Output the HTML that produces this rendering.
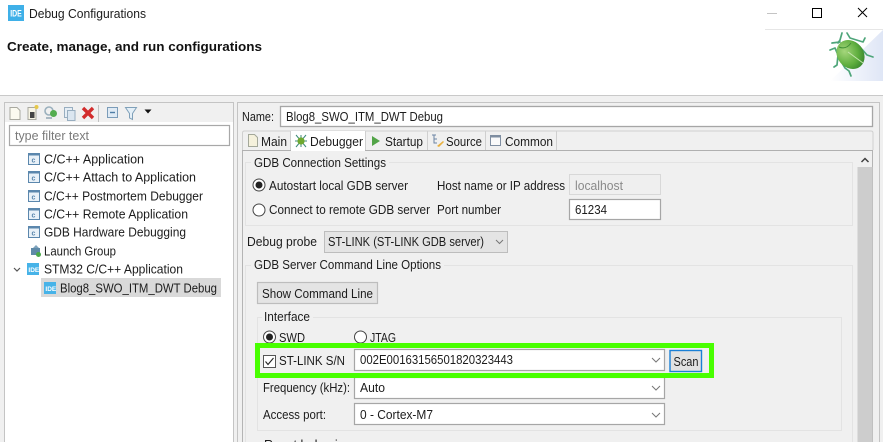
<!DOCTYPE html>
<html><head><meta charset="utf-8"><title>Debug Configurations</title>
<style>
html,body{margin:0;padding:0;width:883px;height:442px;overflow:hidden;background:#fff}
svg{display:block;filter:blur(.3px)}
text{font-family:"Liberation Sans",sans-serif;font-size:12.5px;fill:#1c1c1c}
</style></head><body>
<svg width="883" height="442" viewBox="0 0 883 442" xmlns="http://www.w3.org/2000/svg">
<defs>
<linearGradient id="bg" x1="0" y1="0" x2="1" y2="0"><stop offset="0" stop-color="#ffffff"/><stop offset="1" stop-color="#dfe6f6"/></linearGradient>
<radialGradient id="bug" cx="0.4" cy="0.3" r="0.8"><stop offset="0" stop-color="#a5d67c"/><stop offset="0.6" stop-color="#5fae3e"/><stop offset="1" stop-color="#2f7d2a"/></radialGradient>
<g id="cfile"><rect x="0.5" y="0.5" width="11" height="11" fill="#e9f1f8" stroke="#5b87ad"/><rect x="0" y="0" width="12" height="2.5" fill="#5b87ad"/><text x="3.5" y="9.5" style="font-size:7px;font-weight:bold;fill:#5b87ad">c</text></g>
<g id="ide"><rect width="12" height="12" fill="#47b3e8"/><text x="1.4" y="9" style="font-size:6.5px;font-weight:bold;fill:#fff">IDE</text></g>
</defs>

<rect width="883" height="442" fill="#fff"/>
<!-- title bar -->
<rect x="8" y="5" width="16" height="16" fill="#3fb0e8"/>
<text x="10.2" y="16.5" textLength="11.6" lengthAdjust="spacingAndGlyphs" style="font-size:9px;font-weight:bold;fill:#fff">IDE</text>
<text x="29" y="18" textLength="117" lengthAdjust="spacingAndGlyphs">Debug Configurations</text>
<rect x="767" y="13" width="10" height="1" fill="#c4c4c4"/>
<rect x="812.5" y="8.5" width="9" height="9" fill="none" stroke="#000"/>
<path d="M858 8L867 17M867 8L858 17" stroke="#000" stroke-width="1" fill="none"/>
<rect x="765" y="29" width="118" height="1" fill="#e6e6e6"/>
<text x="7" y="51" textLength="255" lengthAdjust="spacingAndGlyphs" style="font-weight:bold;font-size:13px;fill:#111">Create, manage, and run configurations</text>

<!-- banner art -->
<polygon points="883,30 883,81 830,81" fill="url(#bg)"/>
<g fill="none" stroke="#4ea57a" stroke-width="1.7" stroke-linecap="round" stroke-linejoin="round">
<path d="M842 33L840 40L838 43"/>
<path d="M847 33L850 38L863 42L865 38"/>
<path d="M832 43L840 42"/>
<path d="M830 50L835 48L838 55L837 65L834 67"/>
<path d="M842 63L845 68L849 71L851 76"/>
<path d="M860 47L867 55L873 57"/>
</g>
<ellipse cx="850.500" cy="54.500" rx="13" ry="15.500" transform="rotate(-40 850.500 54.500)" fill="url(#bug)"/>
<path d="M848 52L863 63" stroke="#c4e6ae" stroke-width="1" fill="none"/>
<path d="M839 47Q846 50 851 43" stroke="#3f8f35" stroke-width="1" fill="none"/>

<!-- dialog body -->
<rect x="0" y="95" width="883" height="347" fill="#f0f0f0"/>
<rect x="0" y="95" width="883" height="1" fill="#c9c9c9"/>

<!-- left panel -->
<rect x="4.500" y="102.500" width="229" height="340" fill="#f0f0f0" stroke="#c4c4c4"/>
<rect x="5" y="122" width="228" height="320" fill="#fff"/>
<rect x="9.500" y="125.500" width="220" height="20" fill="#fff" stroke="#a8a8a8" stroke-width="1.200"/>
<text x="15" y="140" textLength="74" lengthAdjust="spacingAndGlyphs" style="fill:#7a7a7a">type filter text</text>

<!-- toolbar -->
<path d="M10 107.500h7l3 3v9h-10z" fill="#fbfaf0" stroke="#a9a9a0"/>
<path d="M28 107.500h8v12h-8z" fill="#f7f4e4" stroke="#a9a9a0"/><rect x="30" y="112" width="4.500" height="6" fill="#444"/><circle cx="36.500" cy="107" r="2" fill="#e6c84a"/>
<circle cx="49" cy="111" r="4" fill="none" stroke="#9ab0bd" stroke-width="1.600"/><path d="M46 118h6" stroke="#a9b8c2" stroke-width="2"/><circle cx="53.500" cy="113.500" r="3.500" fill="#54ad4f"/>
<rect x="64.500" y="107.500" width="8" height="10" fill="#e6eef5" stroke="#98aec0"/><rect x="67.500" y="110.500" width="7.500" height="10" fill="#dbe6f0" stroke="#98aec0"/>
<path d="M83 108L93 118M93 108L83 118" stroke="#d22c2c" stroke-width="3.400" fill="none"/>
<rect x="98" y="105" width="1" height="17" fill="#c2c2c2"/>
<rect x="107.500" y="107.500" width="10" height="10" fill="#dfeaf4" stroke="#7b9cb9"/><path d="M110 112.500h5" stroke="#4f7ea6" stroke-width="1.400"/>
<path d="M125.500 107.500h11l-4 6v6l-3-1.500v-4.500z" fill="#e4eff7" stroke="#7fa0b9"/>
<path d="M144.500 109.500h7l-3.500 4z" fill="#111"/>

<!-- tree -->
<use href="#cfile" x="28" y="153"/><text x="44" y="163.500" textLength="100" lengthAdjust="spacingAndGlyphs">C/C++ Application</text>
<use href="#cfile" x="28" y="171"/><text x="44" y="181.500" textLength="152" lengthAdjust="spacingAndGlyphs">C/C++ Attach to Application</text>
<use href="#cfile" x="28" y="190"/><text x="44" y="200.500" textLength="159" lengthAdjust="spacingAndGlyphs">C/C++ Postmortem Debugger</text>
<use href="#cfile" x="28" y="208"/><text x="44" y="218.500" textLength="144" lengthAdjust="spacingAndGlyphs">C/C++ Remote Application</text>
<use href="#cfile" x="28" y="226"/><text x="44" y="236.500" textLength="142" lengthAdjust="spacingAndGlyphs">GDB Hardware Debugging</text>
<rect x="31" y="248" width="9" height="7" fill="#5f8aa8"/><path d="M33 248l3-3 3 3" fill="#7ea3bd"/><circle cx="38.500" cy="254.500" r="2.500" fill="#4aa84a"/>
<text x="44" y="255.500" textLength="72" lengthAdjust="spacingAndGlyphs">Launch Group</text>
<path d="M14 268l3 3 3-3" fill="none" stroke="#555" stroke-width="1.200"/>
<use href="#ide" x="27" y="263"/><text x="44" y="273.500" textLength="139" lengthAdjust="spacingAndGlyphs">STM32 C/C++ Application</text>
<rect x="41" y="278" width="180" height="19" fill="#d9d9d9"/>
<use href="#ide" x="44" y="282"/><text x="60" y="292.500" textLength="157" lengthAdjust="spacingAndGlyphs">Blog8_SWO_ITM_DWT Debug</text>

<!-- right panel -->
<rect x="237.500" y="102.500" width="642" height="340" fill="#f0f0f0" stroke="#c4c4c4"/>
<text x="242" y="121" textLength="32" lengthAdjust="spacingAndGlyphs">Name:</text>
<rect x="280.500" y="106.500" width="592" height="20" fill="#fff" stroke="#a6a6a6" stroke-width="1.300"/>
<text x="286" y="121" textLength="157" lengthAdjust="spacingAndGlyphs">Blog8_SWO_ITM_DWT Debug</text>

<!-- tabs -->
<rect x="242.500" y="150.500" width="630" height="292" fill="#f0f0f0" stroke="#b4b4b4"/>
<path d="M242.500 150V133q0-2 2-2H871q2 0 2 2v17" fill="#f0f0f0" stroke="#cfcfcf"/>
<rect x="242" y="150" width="631" height="1" fill="#b0b0b0"/>
<path d="M290.500 131v19M365.500 131v19M427.500 131v19M485.500 131v19M556.500 131v19" stroke="#cfcfcf"/>
<rect x="291" y="131" width="74" height="20" fill="#fff"/>
<path d="M248.500 134.500h6l3 3v9h-9z" fill="#f5f1dc" stroke="#a4a89a"/>
<text x="261" y="146" textLength="26" lengthAdjust="spacingAndGlyphs">Main</text>
<path d="M296 135l10 12M306 135l-10 12M295 141h12M301 135v12" stroke="#3d8a78" stroke-width="1"/><circle cx="301" cy="141" r="3.600" fill="#6fa92f"/>
<text x="310" y="146" textLength="53" lengthAdjust="spacingAndGlyphs">Debugger</text>
<path d="M372 136v10l8-5z" fill="#52a447"/>
<text x="385" y="146" textLength="38" lengthAdjust="spacingAndGlyphs">Startup</text>
<path d="M432 135h4M434 135v8h3M434 139h3" stroke="#6c85a5" fill="none"/><path d="M437 146l6-5 1 1-5 5z" fill="#e8b03f"/>
<text x="446" y="146" textLength="36" lengthAdjust="spacingAndGlyphs">Source</text>
<rect x="490.500" y="135.500" width="10" height="10" fill="#fafafa" stroke="#7f8ea1"/><rect x="490" y="135" width="11" height="2.500" fill="#7f8ea1"/>
<text x="505" y="146" textLength="48" lengthAdjust="spacingAndGlyphs">Common</text>

<!-- scrollbar -->
<rect x="857" y="151" width="15" height="291" fill="#f0f0f0"/>
<rect x="857.500" y="167" width="15" height="275" fill="#cdcdcd"/>
<path d="M861.500 162l3.500-3.500 3.500 3.500" fill="none" stroke="#404040" stroke-width="1.500"/>

<!-- GDB connection -->
<rect x="245.500" y="162.500" width="607" height="63" fill="none" stroke="#e3e3e3"/>
<rect x="251" y="158" width="138" height="10" fill="#f0f0f0"/>
<text x="254" y="167" textLength="132" lengthAdjust="spacingAndGlyphs">GDB Connection Settings</text>
<circle cx="259" cy="185" r="6" fill="#fff" stroke="#444"/><circle cx="259" cy="185" r="3.500" fill="#222"/>
<text x="269" y="190" textLength="139" lengthAdjust="spacingAndGlyphs">Autostart local GDB server</text>
<text x="437" y="190" textLength="128" lengthAdjust="spacingAndGlyphs">Host name or IP address</text>
<rect x="569.500" y="174.500" width="91" height="20" fill="#efefef" stroke="#d8d8d8"/>
<text x="575" y="190" textLength="48" lengthAdjust="spacingAndGlyphs" style="fill:#8a8a8a">localhost</text>
<circle cx="259" cy="210" r="6" fill="#fff" stroke="#444"/>
<text x="269" y="214" textLength="161" lengthAdjust="spacingAndGlyphs">Connect to remote GDB server</text>
<text x="437" y="214" textLength="64" lengthAdjust="spacingAndGlyphs">Port number</text>
<rect x="569.500" y="199.500" width="91" height="20" fill="#fff" stroke="#a6a6a6" stroke-width="1.200"/>
<text x="575" y="214" textLength="32" lengthAdjust="spacingAndGlyphs">61234</text>

<!-- probe -->
<text x="247" y="246" textLength="70" lengthAdjust="spacingAndGlyphs">Debug probe</text>
<rect x="324.500" y="231.500" width="183" height="21" fill="#e4e4e4" stroke="#bdbdbd"/>
<text x="328" y="246" textLength="156" lengthAdjust="spacingAndGlyphs">ST-LINK (ST-LINK GDB server)</text>
<path d="M496 240l3.500 3.500 3.500-3.500" fill="none" stroke="#777"/>

<!-- Server group -->
<rect x="245.500" y="265.500" width="607" height="180" fill="none" stroke="#e3e3e3"/>
<rect x="251" y="260" width="193" height="10" fill="#f0f0f0"/>
<text x="254" y="269" textLength="187" lengthAdjust="spacingAndGlyphs">GDB Server Command Line Options</text>
<rect x="257.500" y="282.500" width="120" height="21" fill="#e4e4e4" stroke="#bdbdbd" stroke-width="1.200"/>
<text x="262" y="298" textLength="111" lengthAdjust="spacingAndGlyphs">Show Command Line</text>

<!-- Interface -->
<rect x="257.500" y="317.500" width="584" height="113" fill="none" stroke="#e3e3e3"/>
<rect x="262" y="312" width="51" height="10" fill="#f0f0f0"/>
<text x="264" y="321" textLength="46" lengthAdjust="spacingAndGlyphs">Interface</text>
<circle cx="269.500" cy="337" r="6" fill="#fff" stroke="#444"/><circle cx="269.500" cy="337" r="3.500" fill="#222"/>
<text x="279" y="342" textLength="26" lengthAdjust="spacingAndGlyphs">SWD</text>
<circle cx="360.500" cy="337" r="6" fill="#fff" stroke="#444"/>
<text x="370" y="342" textLength="26" lengthAdjust="spacingAndGlyphs">JTAG</text>

<rect x="263.500" y="355.500" width="12" height="12" fill="#fff" stroke="#555"/>
<path d="M265.500 361.500l2.500 3 5.500-6.500" fill="none" stroke="#222" stroke-width="1.100"/>
<text x="279" y="365" textLength="66" lengthAdjust="spacingAndGlyphs">ST-LINK S/N</text>
<rect x="354.500" y="349.500" width="310" height="21" fill="#fff" stroke="#a6a6a6" stroke-width="1.200"/>
<text x="360" y="364" textLength="153" lengthAdjust="spacingAndGlyphs">002E00163156501820323443</text>
<path d="M652 358l4 4 4-4" fill="none" stroke="#777"/>
<rect x="670" y="350.500" width="31.500" height="21" fill="#e2e2e2" stroke="#1a80d6" stroke-width="1.400"/>
<text x="673.500" y="366" textLength="25" lengthAdjust="spacingAndGlyphs">Scan</text>

<text x="263" y="392" textLength="87" lengthAdjust="spacingAndGlyphs">Frequency (kHz):</text>
<rect x="354.500" y="377.500" width="310" height="21" fill="#fff" stroke="#a6a6a6" stroke-width="1.200"/>
<text x="360" y="392" textLength="25" lengthAdjust="spacingAndGlyphs">Auto</text>
<path d="M652 386l4 4 4-4" fill="none" stroke="#777"/>
<text x="263" y="419" textLength="63" lengthAdjust="spacingAndGlyphs">Access port:</text>
<rect x="354.500" y="403.500" width="310" height="21" fill="#fff" stroke="#a6a6a6" stroke-width="1.200"/>
<text x="360" y="419" textLength="73" lengthAdjust="spacingAndGlyphs">0 - Cortex-M7</text>
<path d="M652 413l4 4 4-4" fill="none" stroke="#777"/>
<text x="264" y="449" textLength="92" lengthAdjust="spacingAndGlyphs">Reset behaviour</text>

<!-- highlight -->
<rect x="257.500" y="345.500" width="454" height="30" fill="none" stroke="#48ff00" stroke-width="5"/>
</svg>
</body></html>
